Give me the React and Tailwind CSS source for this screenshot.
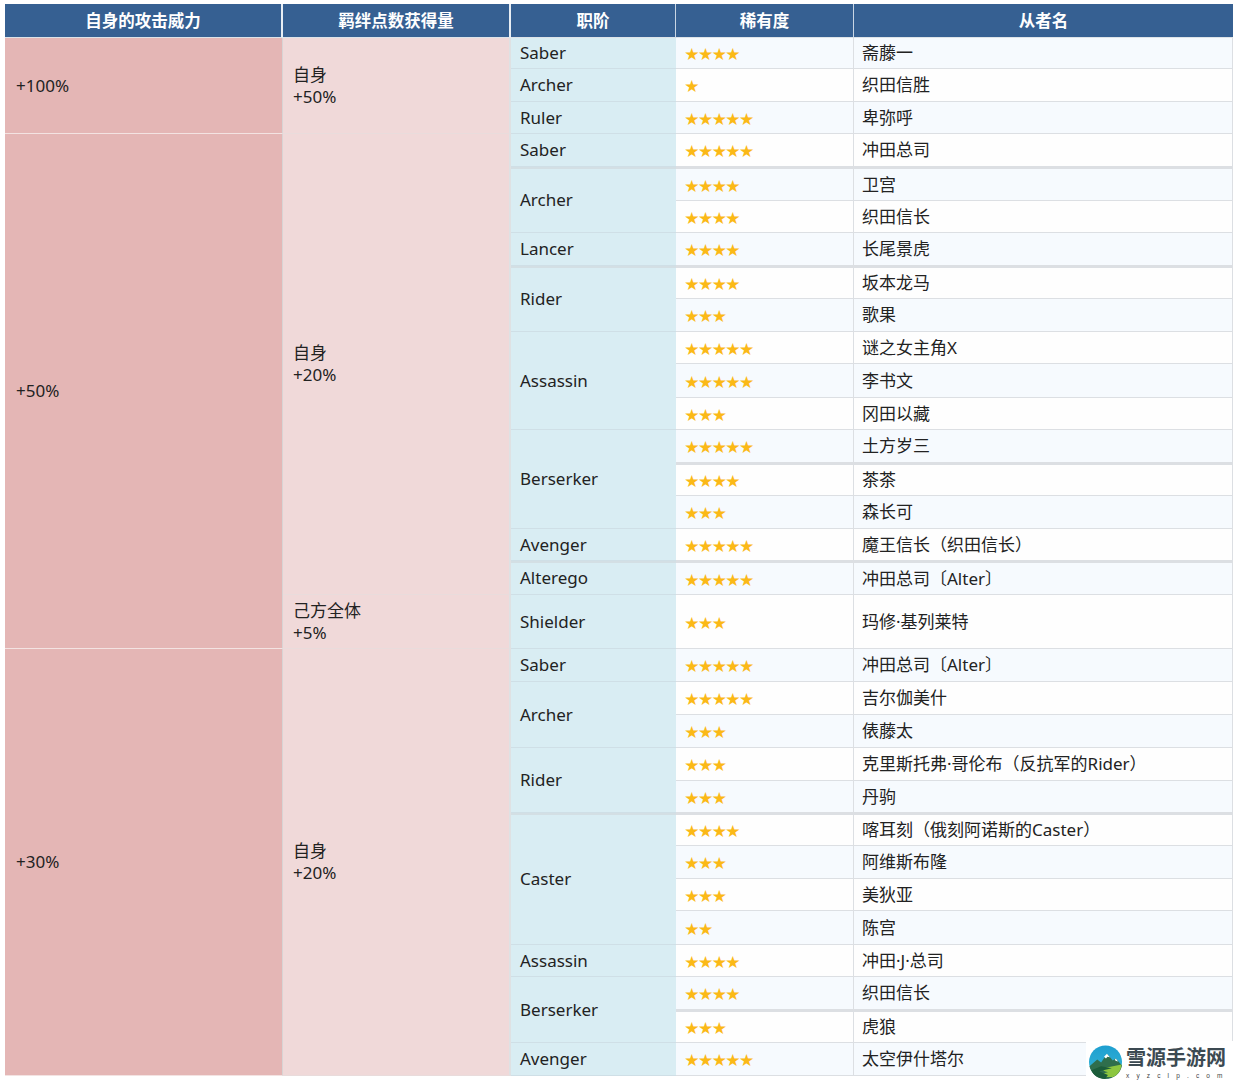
const rows = [
  ["h-[31px]", 4, "斋藤一"],
  ["h-[33px]", 1, "织田信胜"],
  ["h-[32px]", 5, "卑弥呼"],
  ["h-[33px]", 5, "冲田总司"],
  ["h-[34px]", 4, "卫宫", true],
  ["h-[32px]", 4, "织田信长"],
  ["h-[33px]", 4, "长尾景虎"],
  ["h-[33px]", 4, "坂本龙马", true],
  ["h-[33px]", 3, "歌果"],
  ["h-[32px]", 5, "谜之女主角X"],
  ["h-[34px]", 5, "李书文"],
  ["h-[32px]", 3, "冈田以藏"],
  ["h-[33px]", 5, "土方岁三"],
  ["h-[33px]", 4, "茶茶", true],
  ["h-[33px]", 3, "森长可"],
  ["h-[32px]", 5, "魔王信长（织田信长）"],
  ["h-[34px]", 5, "冲田总司〔Alter〕", true],
  ["h-[54px]", 3, "玛修·基列莱特"],
  ["h-[33px]", 5, "冲田总司〔Alter〕"],
  ["h-[33px]", 5, "吉尔伽美什"],
  ["h-[33px]", 3, "俵藤太"],
  ["h-[33px]", 3, "克里斯托弗·哥伦布（反抗军的Rider）"],
  ["h-[32px]", 3, "丹驹"],
  ["h-[33px]", 4, "喀耳刻（俄刻阿诺斯的Caster）", true],
  ["h-[33px]", 3, "阿维斯布隆"],
  ["h-[32px]", 3, "美狄亚"],
  ["h-[34px]", 2, "陈宫"],
  ["h-[32px]", 4, "冲田·J·总司"],
  ["h-[33px]", 4, "织田信长"],
  ["h-[33px]", 3, "虎狼", true],
  ["h-[33px]", 5, "太空伊什塔尔"],
];

const classes = {
  0: ["Saber", 1], 1: ["Archer", 1], 2: ["Ruler", 1], 3: ["Saber", 1],
  4: ["Archer", 2, true], 6: ["Lancer", 1], 7: ["Rider", 2, true], 9: ["Assassin", 3],
  12: ["Berserker", 3], 15: ["Avenger", 1], 16: ["Alterego", 1, true], 17: ["Shielder", 1],
  18: ["Saber", 1], 19: ["Archer", 2], 21: ["Rider", 2], 23: ["Caster", 4, true],
  27: ["Assassin", 1], 28: ["Berserker", 2], 30: ["Avenger", 1],
};

const attack = {
  0: ["+100%", 3],
  3: ["+50%", 15],
  18: ["+30%", 13],
};

const bond = {
  0: ["自身", "+50%", 3],
  3: ["自身", "+20%", 14],
  17: ["己方全体", "+5%", 1],
  18: ["自身", "+20%", 13],
};

function Logo() {
  return (
    <div className="absolute right-0 bottom-0 flex h-[39px] w-[148px] items-start bg-white pt-[4px] pl-[2px]">
      <svg width="35" height="34" viewBox="0 0 35 35" className="shrink-0">
        <defs>
          <linearGradient id="sky" x1="0" y1="0" x2="0" y2="1">
            <stop offset="0" stopColor="#1f9fd0" />
            <stop offset="1" stopColor="#35b6d6" />
          </linearGradient>
        </defs>
        <circle cx="17.5" cy="17.5" r="17" fill="url(#sky)" />
        <path d="M1 22 L9 15 L13 18 L19 9 L25 16 L28 14 L34.5 21 C33 29 26 35 17.5 35 C9 35 2.5 29 1 22Z" fill="#2f6e4c" />
        <path d="M16 12 L19 9 L22 12.5 L19.5 12 L18 14Z" fill="#ffffff" />
        <path d="M27 15.5 L28 14 L30.5 17 L28.5 16.5Z" fill="#ffffff" />
        <path d="M15 24 L34 20 C33.5 26 30 31 25 33 L15 33 C12 31 14 29 20 28 C16 27 14 26 15 24Z" fill="#8cc63f" />
        <path d="M3 26 L13 22 L24 24 L11 27 L20 31 L17 35 C10 35 5 31 3 26Z" fill="#1c5c3a" />
      </svg>
      <div className="ml-[3px] flex flex-col">
        <span className="font-['Noto_Sans_CJK_SC',sans-serif] text-[20px] leading-[24px] font-bold whitespace-nowrap text-[#3c4a52]">雪源手游网</span>
        <span className="mt-[3px] font-['Liberation_Sans',sans-serif] text-[6.5px] leading-[8px] tracking-[1.1em] whitespace-nowrap text-[#444]">xyzclp.com</span>
      </div>
    </div>
  );
}

export default function App() {
  return (
    <div className="relative h-[1080px] w-[1234px] overflow-hidden bg-white pt-1 pl-[5px] font-['Noto_Sans','Noto_Sans_CJK_SC',sans-serif] text-[17px] leading-[22px] text-[#222]">
      <table className="w-[1228px] table-fixed border-separate border-spacing-0">
        <colgroup>
          <col className="w-[278px]" />
          <col className="w-[228px]" />
          <col className="w-[165px]" />
          <col className="w-[178px]" />
          <col className="w-[379px]" />
        </colgroup>
        <thead>
          <tr className="h-[34px] bg-[#366092] text-center text-[16.5px] font-bold text-white">
            <th className="border-r-2 border-b border-r-[#e8eef4] border-b-[#dde3e8] p-0">自身的攻击威力</th>
            <th className="border-r-2 border-b border-r-[#e8eef4] border-b-[#dde3e8] p-0">羁绊点数获得量</th>
            <th className="border-r border-b border-r-[#c9d6e4] border-b-[#dde3e8] p-0">职阶</th>
            <th className="border-r border-b border-r-[#c9d6e4] border-b-[#dde3e8] p-0">稀有度</th>
            <th className="border-b border-b-[#dde3e8] p-0">从者名</th>
          </tr>
        </thead>
        <tbody>
          {rows.map(([h, stars, name, thick], i) => {
            const stripe = i % 2 === 0 ? "bg-[#f6fafe]" : "bg-[#fefefe]";
            const top = thick ? "border-t-2 border-t-[#dcdfe3]" : "";
            return (
              <tr key={i} className={h}>
                {attack[i] && (
                  <td rowSpan={attack[i][1]} className="border-r border-b border-r-[#d8d4d4] border-b-[#f3e3e2] bg-[#e4b6b5] p-0 pl-[11px]">
                    {attack[i][0]}
                  </td>
                )}
                {bond[i] && (
                  <td rowSpan={bond[i][2]} className="border-r-2 border-b border-r-[#dfe1e3] border-b-[#e9dcdc] bg-[#f0d9d9] p-0 pl-[10px]">
                    <div>{bond[i][0]}</div>
                    <div>{bond[i][1]}</div>
                  </td>
                )}
                {classes[i] && (
                  <td rowSpan={classes[i][1]} className={`border-b border-b-[#cfdfe6] bg-[#d9edf3] p-0 pl-[9px] ${classes[i][2] ? "border-t-2 border-t-[#d3dfe4] pb-[2px]" : ""}`}>
                    {classes[i][0]}
                  </td>
                )}
                <td className={`border-r border-b border-r-[#dcdfe3] border-b-[#dcdfe3] p-0 pl-[9px] font-['Noto_Sans_CJK_SC',sans-serif] text-[13.7px] leading-[20px] text-[#fbb917] ${stripe} ${top}`}>
                  {"★".repeat(stars)}
                </td>
                <td className={`border-r border-b border-r-[#dcdfe3] border-b-[#dcdfe3] p-0 pl-[8px] whitespace-nowrap ${stripe} ${top}`}>
                  {name}
                </td>
              </tr>
            );
          })}
        </tbody>
      </table>
      <Logo />
    </div>
  );
}
